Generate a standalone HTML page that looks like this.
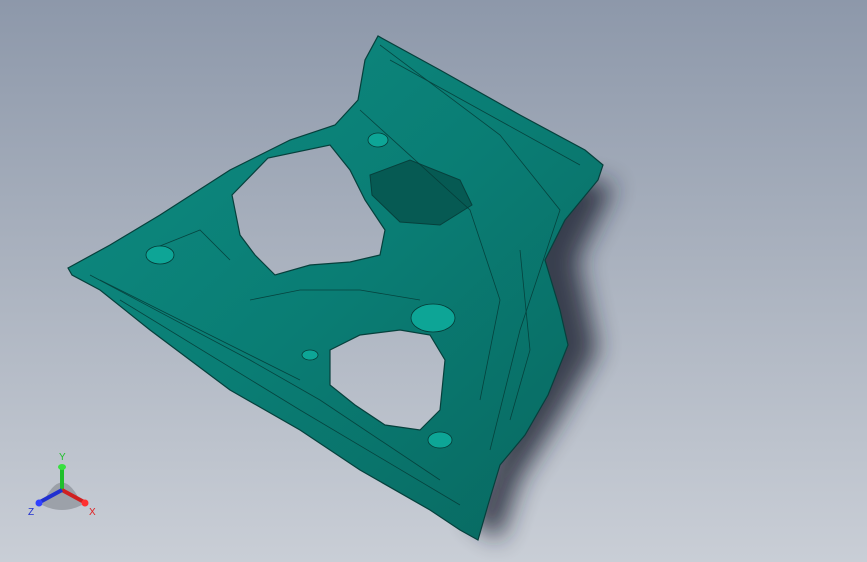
<!DOCTYPE html>
<html><head><style>
html,body{margin:0;padding:0;width:867px;height:562px;overflow:hidden}
body{background:linear-gradient(180deg,#8d98aa 0%,#a9b1be 45%,#c9ced6 100%)}
svg{position:absolute;left:0;top:0}
</style></head><body>
<svg width="867" height="562" viewBox="0 0 867 562">
<defs>
<filter id="sh" x="-20%" y="-20%" width="140%" height="140%"><feGaussianBlur stdDeviation="12"/></filter>
<linearGradient id="tl" x1="0" y1="0" x2="1" y2="1"><stop offset="0" stop-color="#0e8c82"/><stop offset="0.5" stop-color="#0a7d74"/><stop offset="1" stop-color="#08675f"/></linearGradient>
</defs>
<path d="M525 170 L615 185 L578 260 L598 350 L558 420 L520 480 L500 540 L470 520 L520 380 Z" fill="#1e2230" opacity="0.8" filter="url(#sh)"/>
<path fill-rule="evenodd" fill="url(#tl)" stroke="#06403c" stroke-width="1.2" d="M68 268 L110 245 L160 215 L230 170 L290 140 L335 125 L358 100 L365 60 L378 36 L440 70 L520 115 L585 150 L603 165 L598 180 L565 220 L545 260 L560 310 L568 345 L548 395 L525 435 L500 465 L488 505 L478 540 L460 530 L430 510 L360 470 L300 430 L230 390 L150 330 L100 290 L72 275 Z
M232 195 L268 158 L330 145 L350 170 L365 200 L385 230 L380 255 L350 262 L310 265 L275 275 L255 255 L240 235 Z
M330 350 L360 335 L400 330 L430 335 L445 360 L440 410 L420 430 L385 425 L355 405 L330 385 Z"/>
<path d="M370 175 L410 160 L460 180 L472 205 L440 225 L400 222 L372 195 Z" fill="#065a53" stroke="#06403c"/>
<g fill="none" stroke="#053a36" stroke-width="0.8" opacity="0.85">
<path d="M90 275 L250 360 L320 400 L440 480"/>
<path d="M120 300 L300 410 L460 505"/>
<path d="M380 45 L500 135 L560 210 L520 330 L490 450"/>
<path d="M360 110 L470 210 L500 300 L480 400"/>
<path d="M250 300 L300 290 L360 290 L420 300"/>
<path d="M150 250 L200 230 L230 260"/>
<path d="M390 60 L580 165"/>
<path d="M100 280 L200 330 L300 380"/>
<path d="M520 250 L530 350 L510 420"/>
</g>
<g fill="#0da596" stroke="#053a36" stroke-width="0.8">
<ellipse cx="433" cy="318" rx="22" ry="14"/>
<ellipse cx="440" cy="440" rx="12" ry="8"/>
<ellipse cx="378" cy="140" rx="10" ry="7"/>
<ellipse cx="160" cy="255" rx="14" ry="9"/>
<ellipse cx="310" cy="355" rx="8" ry="5"/>
</g>
<g transform="translate(62,490)">
<path d="M-20 15 Q0 -30 20 15 Q0 25 -20 15Z" fill="#6d7178" opacity="0.45"/>
<line x1="0" y1="0" x2="0" y2="-22" stroke="#1fbf2a" stroke-width="4"/>
<ellipse cx="0" cy="-23" rx="4" ry="3" fill="#38e040"/>
<line x1="0" y1="0" x2="22" y2="12" stroke="#d02020" stroke-width="4"/>
<circle cx="23" cy="13" r="3.5" fill="#ff3030"/>
<line x1="0" y1="0" x2="-22" y2="12" stroke="#2030d0" stroke-width="4"/>
<circle cx="-23" cy="13" r="3.5" fill="#3040ff"/>
<text x="-3" y="-30" font-family="Liberation Sans, sans-serif" font-size="10" fill="#1fbf2a">Y</text>
<text x="27" y="25" font-family="Liberation Sans, sans-serif" font-size="10" fill="#e02020">X</text>
<text x="-34" y="25" font-family="Liberation Sans, sans-serif" font-size="10" fill="#2030d0">Z</text>
</g>
</svg>
</body></html>
